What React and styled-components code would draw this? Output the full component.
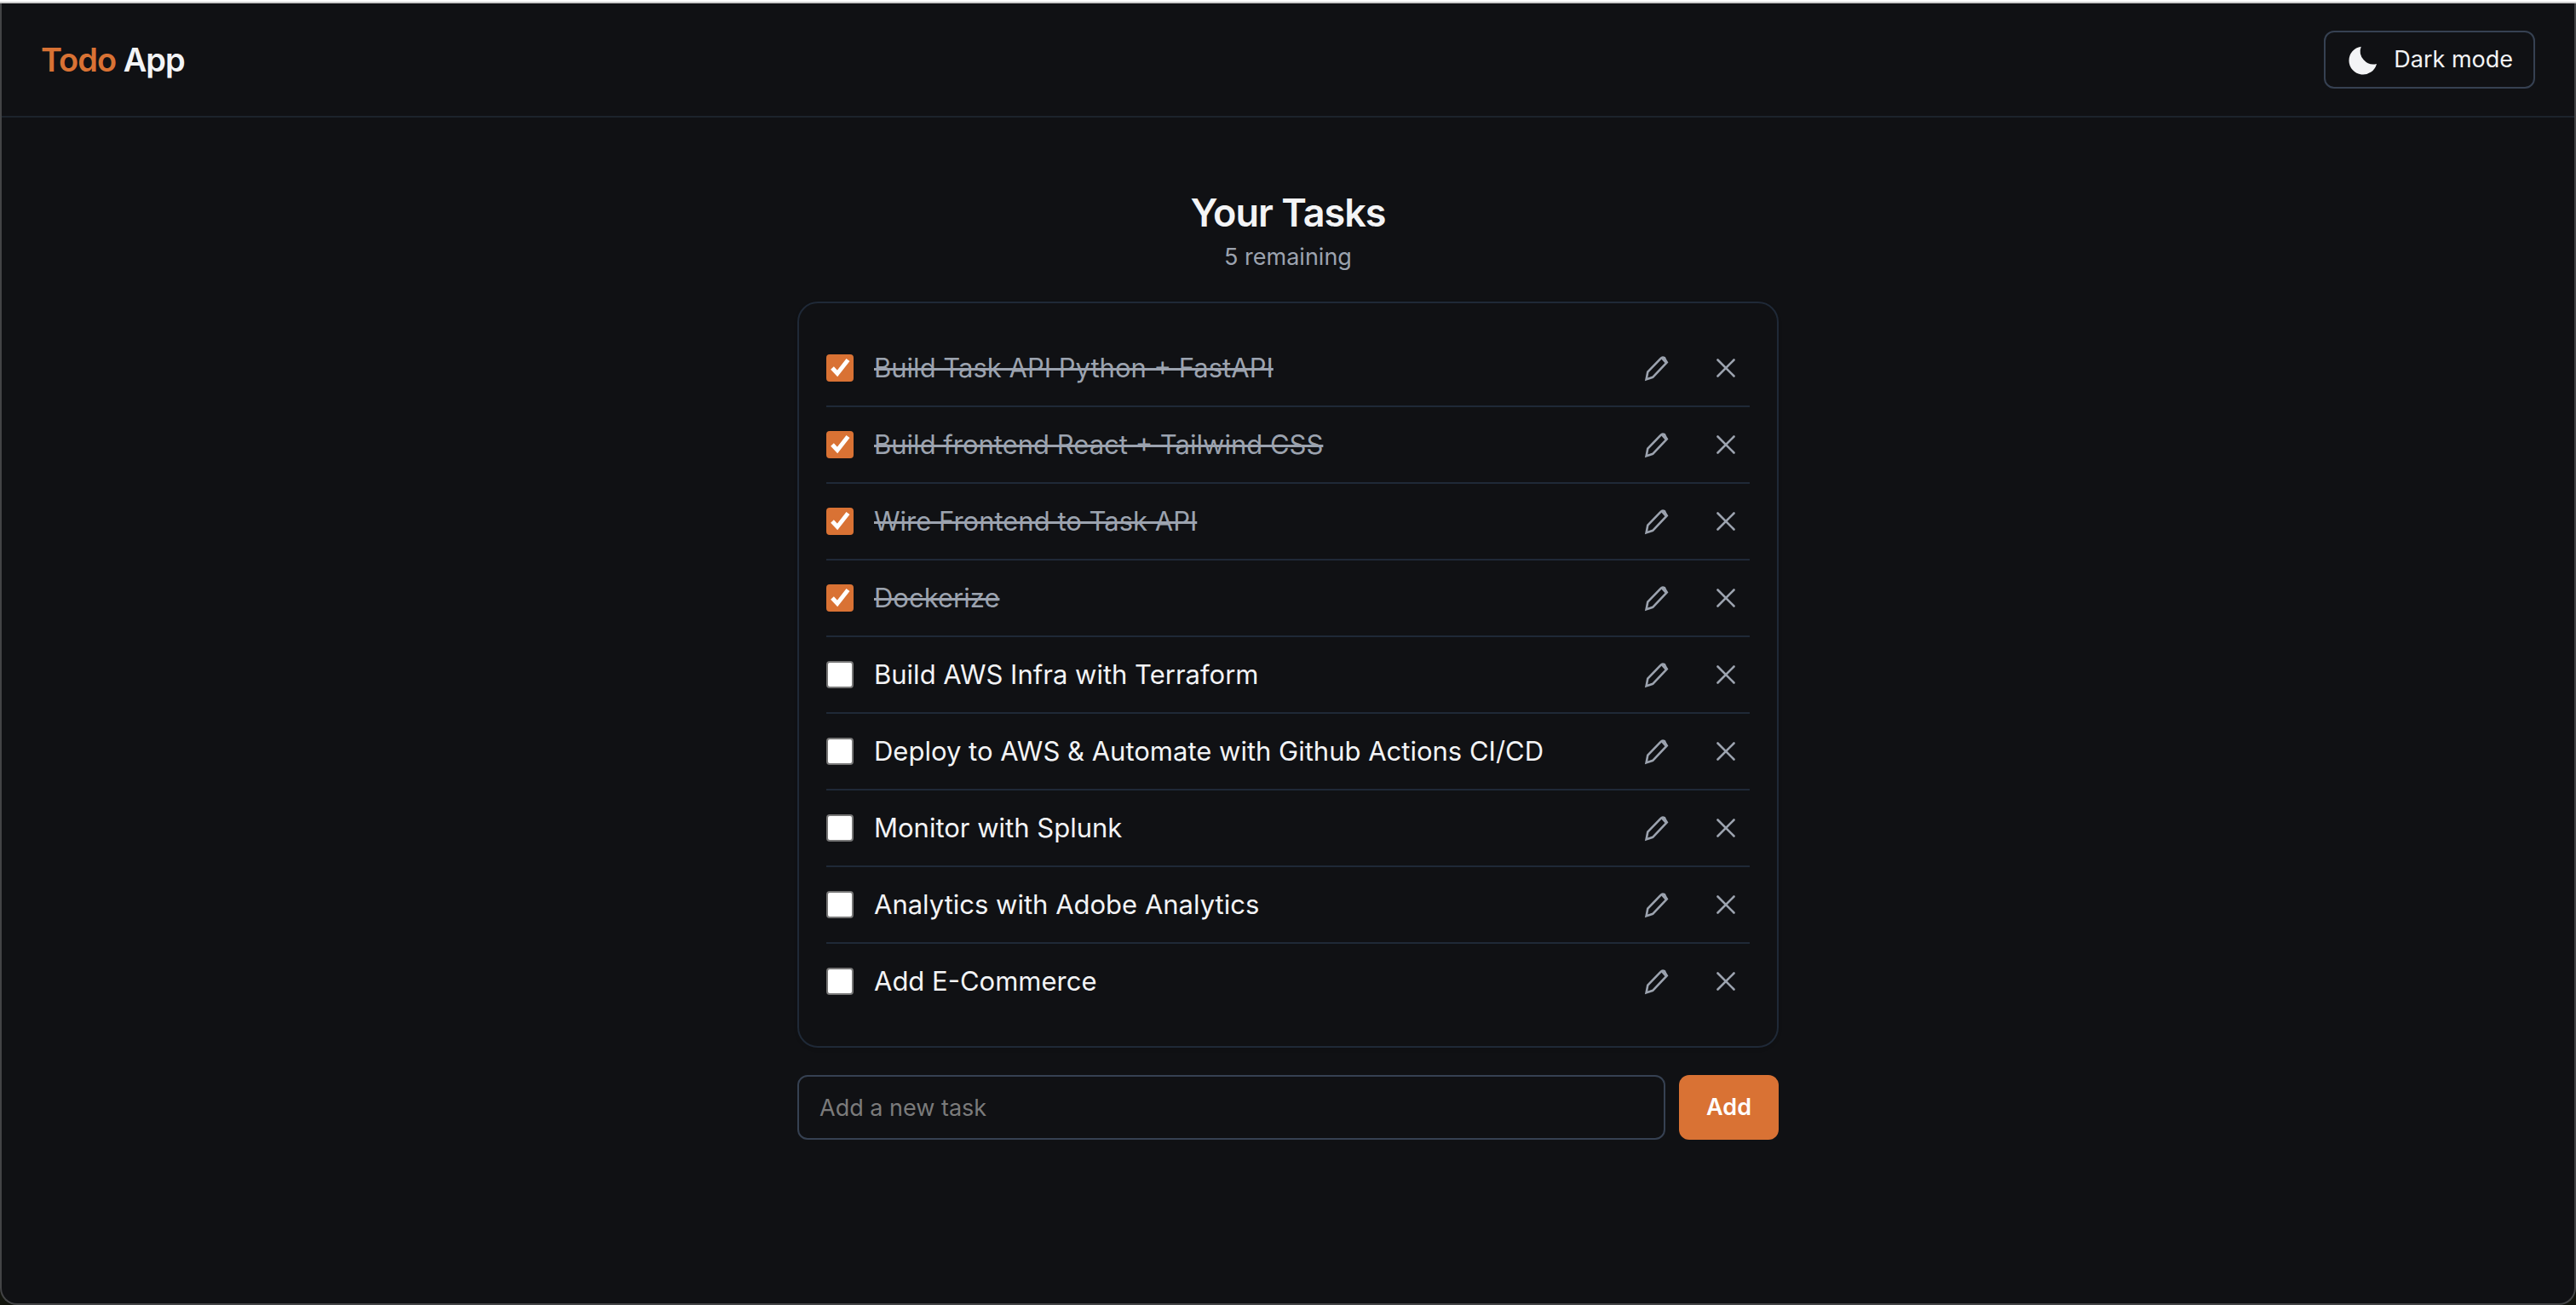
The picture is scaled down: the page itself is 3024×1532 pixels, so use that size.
import React, { useState } from "react";
import styled, { createGlobalStyle } from "styled-components";

const GlobalStyle = createGlobalStyle`
  *, *::before, *::after { box-sizing: border-box; }
  body {
    margin: 0;
    background: #101114;
    color: #f3f4f6;
    font-family: Inter, "Noto Sans", sans-serif;
    -webkit-font-smoothing: antialiased;
  }
  button, input { font: inherit; }
`;

const Backdrop = styled.div`
  min-height: 100vh;
  display: flex;
  background: linear-gradient(#ffffff 2px, #cccccc 2px, #cccccc 4px, #12140d 4px);
  padding-top: 4px;
`;

const Window = styled.div`
  flex: 1;
  display: flex;
  flex-direction: column;
  background: #101114;
  border: 2px solid #434446;
  border-top: 0;
  border-radius: 0 0 20px 20px;
`;

const Header = styled.header`
  display: flex;
  align-items: center;
  justify-content: space-between;
  padding: 32px 46px;
  border-bottom: 2px solid #1c232c;
`;

const Brand = styled.div`
  font-size: 38px;
  line-height: 56px;
  font-weight: 600;
  letter-spacing: -1px;
`;

const Accent = styled.span`
  color: #d97234;
`;

const ThemeButton = styled.button`
  display: inline-flex;
  align-items: center;
  gap: 16px;
  padding: 12px 24px;
  border: 2px solid #364152;
  border-radius: 12px;
  background: transparent;
  color: #f3f4f6;
  font-size: 27px;
  line-height: 40px;
  cursor: pointer;
`;

const Main = styled.main`
  width: 100%;
  max-width: 1152px;
  margin: 0 auto;
  padding: 80px 0;
`;

const Heading = styled.div`
  margin-bottom: 32px;
  text-align: center;
`;

const Title = styled.h1`
  margin: 0;
  font-size: 45px;
  line-height: 64px;
  font-weight: 600;
  letter-spacing: -1px;
`;

const Remaining = styled.p`
  margin: 0;
  color: #9ca3af;
  font-size: 27px;
  line-height: 40px;
`;

const Card = styled.section`
  padding: 32px;
  border: 2px solid #1f2937;
  border-radius: 24px;
  box-shadow: 0 2px 4px rgba(0, 0, 0, 0.1);
`;

const TaskList = styled.ul`
  margin: 0;
  padding: 0;
  list-style: none;
`;

const TaskRow = styled.li`
  display: flex;
  align-items: center;
  gap: 16px;
  min-height: 88px;

  & + & { border-top: 2px solid #1f2937; min-height: 90px; }
`;

const TaskLabel = styled.label`
  flex: 1;
  display: flex;
  align-items: center;
  gap: 24px;
  cursor: pointer;
`;

const CheckWrap = styled.span`
  display: grid;
  width: 32px;
  height: 32px;

  & > * { grid-area: 1 / 1; }
`;

const Checkbox = styled.input`
  appearance: none;
  width: 32px;
  height: 32px;
  margin: 0;
  border: 2px solid #767676;
  border-radius: 4px;
  background: #ffffff;

  &:checked { border-color: #d97234; background: #d97234; }
`;

const TaskText = styled.span`
  font-size: 31px;
  line-height: 48px;
  color: ${(p) => (p.$done ? "#9ca3af" : "#f3f4f6")};
  text-decoration: ${(p) => (p.$done ? "line-through 3px" : "none")};
`;

const Actions = styled.div`
  display: flex;
  gap: 24px;
`;

const IconButton = styled.button`
  display: grid;
  place-items: center;
  width: 56px;
  height: 56px;
  padding: 0;
  border: 0;
  border-radius: 8px;
  background: transparent;
  color: #9ca3af;
  cursor: pointer;
`;

const AddForm = styled.form`
  display: flex;
  gap: 16px;
  margin-top: 32px;
`;

const AddInput = styled.input`
  flex: 1;
  min-width: 0;
  height: 76px;
  padding: 0 24px;
  border: 2px solid #364152;
  border-radius: 12px;
  background: transparent;
  color: #f3f4f6;
  font-size: 27px;
  line-height: 40px;

  &::placeholder { color: #7b7b7b; opacity: 1; }
`;

const AddButton = styled.button`
  padding: 0 32px;
  border: 0;
  border-radius: 12px;
  background: #d97234;
  color: #ffffff;
  font-size: 27px;
  line-height: 40px;
  font-weight: 600;
  cursor: pointer;
`;

const MoonIcon = () => (
  <svg width="40" height="40" viewBox="0 0 40 40" fill="currentColor" aria-hidden="true">
    <path d="M17.7 4.7 A16.5 16.5 0 1 0 36 25 A15.5 15.5 0 0 1 17.7 4.7 Z" />
  </svg>
);

const CheckIcon = () => (
  <svg width="32" height="32" viewBox="0 0 32 32" fill="none" stroke="#ffffff" strokeWidth="5" pointerEvents="none" aria-hidden="true">
    <path d="M7 16 L13 22.500 L25.500 6.500" />
  </svg>
);

const PencilIcon = () => (
  <svg width="32" height="32" viewBox="0 0 32 32" fill="none" stroke="currentColor" strokeWidth="2.6" aria-hidden="true">
    <path d="M2.600 29.400 L4.300 20.600 L19.500 4.800 Q21.500 2.600 24 4.200 L25 6.500 L26.800 9.300 L10.200 26.800 Z" />
    <path d="M21 4.500 L25.500 9.500" />
  </svg>
);

const CloseIcon = () => (
  <svg width="32" height="32" viewBox="0 0 32 32" fill="none" stroke="currentColor" strokeWidth="2.6" strokeLinecap="round" aria-hidden="true">
    <path d="M6.500 6.500 L25.500 25.500 M25.500 6.500 L6.500 25.500" />
  </svg>
);

const initialTasks = [
  { id: 1, text: "Build Task API Python + FastAPI", done: true },
  { id: 2, text: "Build frontend React + Tailwind CSS", done: true },
  { id: 3, text: "Wire Frontend to Task API", done: true },
  { id: 4, text: "Dockerize", done: true },
  { id: 5, text: "Build AWS Infra with Terraform", done: false },
  { id: 6, text: "Deploy to AWS & Automate with Github Actions CI/CD", done: false },
  { id: 7, text: "Monitor with Splunk", done: false },
  { id: 8, text: "Analytics with Adobe Analytics", done: false },
  { id: 9, text: "Add E-Commerce", done: false },
];

export default function App() {
  const [tasks, setTasks] = useState(initialTasks);
  const [draft, setDraft] = useState("");

  const toggle = (id) =>
    setTasks((list) => list.map((t) => (t.id === id ? { ...t, done: !t.done } : t)));
  const remove = (id) => setTasks((list) => list.filter((t) => t.id !== id));
  const add = (event) => {
    event.preventDefault();
    if (!draft.trim()) return;
    setTasks((list) => [...list, { id: Date.now(), text: draft.trim(), done: false }]);
    setDraft("");
  };

  return (
    <Backdrop>
      <GlobalStyle />
      <Window>
        <Header>
          <Brand><Accent>Todo</Accent> App</Brand>
          <ThemeButton type="button"><MoonIcon />Dark mode</ThemeButton>
        </Header>
        <Main>
          <Heading>
            <Title>Your Tasks</Title>
            <Remaining>{tasks.filter((t) => !t.done).length} remaining</Remaining>
          </Heading>
          <Card>
            <TaskList>
              {tasks.map((t) => (
                <TaskRow key={t.id}>
                  <TaskLabel>
                    <CheckWrap>
                      <Checkbox type="checkbox" checked={t.done} onChange={() => toggle(t.id)} />
                      {t.done && <CheckIcon />}
                    </CheckWrap>
                    <TaskText $done={t.done}>{t.text}</TaskText>
                  </TaskLabel>
                  <Actions>
                    <IconButton type="button" aria-label="Edit task"><PencilIcon /></IconButton>
                    <IconButton type="button" aria-label="Delete task" onClick={() => remove(t.id)}><CloseIcon /></IconButton>
                  </Actions>
                </TaskRow>
              ))}
            </TaskList>
          </Card>
          <AddForm onSubmit={add}>
            <AddInput
              type="text"
              aria-label="New task"
              placeholder="Add a new task"
              value={draft}
              onChange={(e) => setDraft(e.target.value)}
            />
            <AddButton type="submit">Add</AddButton>
          </AddForm>
        </Main>
      </Window>
    </Backdrop>
  );
}
